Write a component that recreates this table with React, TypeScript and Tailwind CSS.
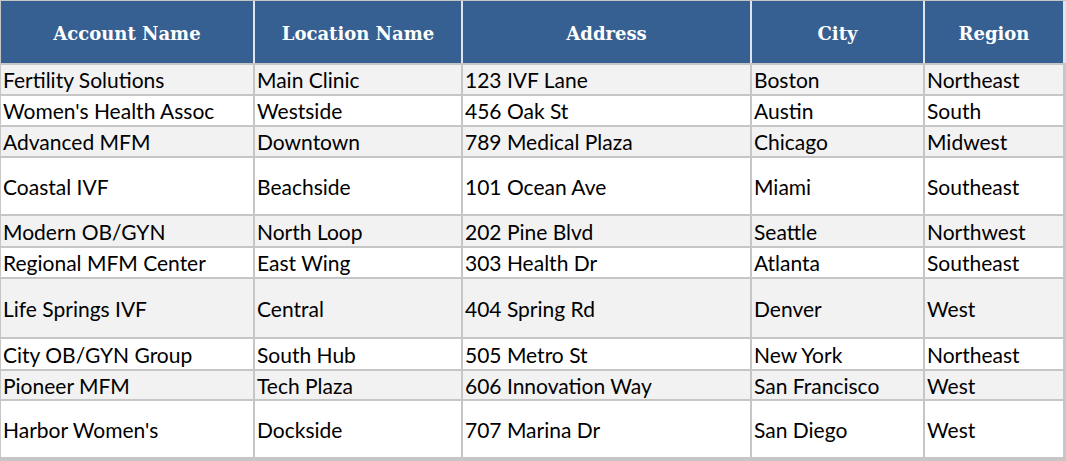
const rows = [
  { account: "Fertility Solutions", location: "Main Clinic", address: "123 IVF Lane", city: "Boston", region: "Northeast", h: "h-[29px]" },
  { account: "Women's Health Assoc", location: "Westside", address: "456 Oak St", city: "Austin", region: "South", h: "h-[29px]" },
  { account: "Advanced MFM", location: "Downtown", address: "789 Medical Plaza", city: "Chicago", region: "Midwest", h: "h-[29px]" },
  { account: "Coastal IVF", location: "Beachside", address: "101 Ocean Ave", city: "Miami", region: "Southeast", h: "h-[56px]" },
  { account: "Modern OB/GYN", location: "North Loop", address: "202 Pine Blvd", city: "Seattle", region: "Northwest", h: "h-[30px]" },
  { account: "Regional MFM Center", location: "East Wing", address: "303 Health Dr", city: "Atlanta", region: "Southeast", h: "h-[29px]" },
  { account: "Life Springs IVF", location: "Central", address: "404 Spring Rd", city: "Denver", region: "West", h: "h-[58px]" },
  { account: "City OB/GYN Group", location: "South Hub", address: "505 Metro St", city: "New York", region: "Northeast", h: "h-[30px]" },
  { account: "Pioneer MFM", location: "Tech Plaza", address: "606 Innovation Way", city: "San Francisco", region: "West", h: "h-[28px]" },
  { account: "Harbor Women's", location: "Dockside", address: "707 Marina Dr", city: "San Diego", region: "West", h: "h-[56px]" },
];

const headers = ["Account Name", "Location Name", "Address", "City", "Region"];
const cols = "grid grid-cols-[252px_206px_287px_171px_138px] gap-x-[2px]";

export default function App() {
  return (
    <div className="w-[1066px] h-[461px] bg-white overflow-hidden">
      <div className="border-l border-t border-[#c6c6c6]">
        <div className={`${cols} bg-[#dfe5ee] border-r-[3px] border-r-[#dfe5ee]`}>
          {headers.map((h) => (
            <div
              key={h}
              className="h-[62px] pt-[3px] bg-[#365f92] flex items-center justify-center text-white font-bold text-[18px] font-['DejaVu_Serif',serif]"
            >
              {h}
            </div>
          ))}
        </div>
        <div className="flex flex-col gap-y-[2px] bg-[#c6c6c6] pt-[2px] pb-[4px] pr-[3px]">
          {rows.map((r, i) => (
            <div key={r.account} className={cols}>
              {[r.account, r.location, r.address, r.city, r.region].map((v, j) => (
                <div
                  key={j}
                  className={`${r.h} ${i % 2 === 0 ? "bg-[#f2f2f2]" : "bg-white"} flex items-center pl-[2px] text-[21px] leading-none text-black font-['Lato',sans-serif] whitespace-nowrap`}
                >
                  {v}
                </div>
              ))}
            </div>
          ))}
        </div>
      </div>
    </div>
  );
}
